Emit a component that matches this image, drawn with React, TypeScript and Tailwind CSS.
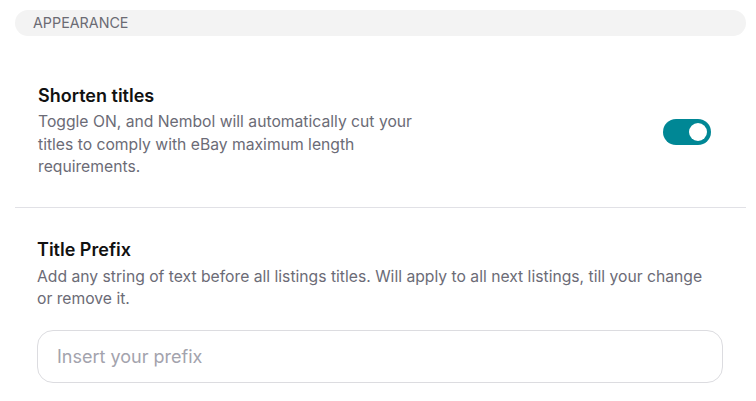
export default function App() {
  return (
    <div className="w-[756px] h-[401px] overflow-hidden bg-white font-['Inter',sans-serif]">
      <div className="pt-[10px] pl-[15px] pr-[10px]">
        <div className="h-[26px] rounded-full bg-[#f3f3f3] pl-[18px] flex items-center text-[14.3px] text-[#6b6b73]">
          APPEARANCE
        </div>
        <div className="pl-[23px] pr-[35px] pt-[48px] pb-[28px] flex items-center justify-between">
          <div className="w-[395px]">
            <div className="text-[18px] leading-[24px] font-semibold text-[#111]">Shorten titles</div>
            <p className="mt-[3px] text-[15.7px] leading-[22.5px] text-[#6b6b76]">
              Toggle ON, and Nembol will automatically cut your titles to comply with eBay maximum length requirements.
            </p>
          </div>
          <button className="mt-[2px] w-[48px] h-[26px] rounded-full bg-[#008795] flex items-center justify-end pr-[4px]">
            <span className="w-[18px] h-[18px] rounded-full bg-white" />
          </button>
        </div>
        <div className="h-px bg-[#e1e1e6]" />
        <div className="pl-[22px] pr-[23px] pt-[30px]">
          <div className="text-[18px] leading-[24px] font-semibold text-[#111]">Title Prefix</div>
          <p className="mt-[4px] max-w-[680px] text-[15.7px] leading-[22.5px] text-[#6b6b76]">
            Add any string of text before all listings titles. Will apply to all next listings, till your change or remove it.
          </p>
          <input
            className="mt-[19px] w-full h-[53px] rounded-[16px] border border-[#dcdce0] px-[19px] text-[18px] text-[#333] placeholder:text-[#a3a3ad] outline-none"
            placeholder="Insert your prefix"
          />
        </div>
      </div>
    </div>
  );
}
